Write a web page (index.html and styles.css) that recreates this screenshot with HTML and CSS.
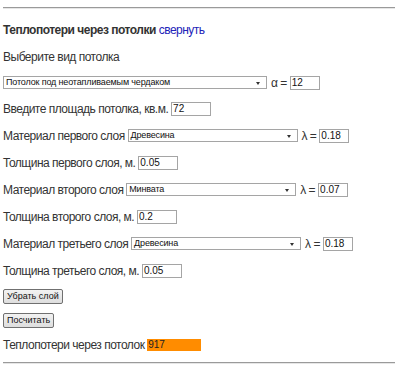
FILE: index.html
```html
<!DOCTYPE html>
<html lang="ru">
<head>
    <meta charset="UTF-8">
    <title>Теплопотери через потолки</title>
    <link rel="stylesheet" href="styles.css">
</head>
<body>
    <div class="calc">
        <hr class="rule rule-top">

        <div class="row row-title">
            <b>Теплопотери через потолки</b>&nbsp;<a href="#" class="toggle">свернуть</a>
        </div>

        <div class="row">Выберите вид потолка</div>

        <div class="row row-select">
            <span class="select select-wide">Потолок под неотапливаемым чердаком</span>
            <span class="sym">α =</span>
            <span class="field field-coef">12</span>
        </div>

        <div class="row">
            Введите площадь потолка, кв.м.&nbsp;<span class="field">72</span>
        </div>

        <div class="row">
            Материал первого слоя&nbsp;<span class="select">Древесина</span>
            <span class="sym">λ =</span>
            <span class="field field-coef">0.18</span>
        </div>

        <div class="row">
            Толщина первого слоя, м.&nbsp;<span class="field">0.05</span>
        </div>

        <div class="row">
            Материал второго слоя&nbsp;<span class="select">Минвата</span>
            <span class="sym">λ =</span>
            <span class="field field-coef">0.07</span>
        </div>

        <div class="row">
            Толщина второго слоя, м.&nbsp;<span class="field">0.2</span>
        </div>

        <div class="row">
            Материал третьего слоя&nbsp;<span class="select">Древесина</span>
            <span class="sym">λ =</span>
            <span class="field field-coef">0.18</span>
        </div>

        <div class="row">
            Толщина третьего слоя, м.&nbsp;<span class="field">0.05</span>
        </div>

        <div class="row row-btn">
            <button class="btn">Убрать слой</button>
        </div>

        <div class="row row-btn">
            <button class="btn">Посчитать</button>
        </div>

        <div class="row row-result">
            Теплопотери через потолок&nbsp;<span class="result">917</span>
        </div>

        <hr class="rule rule-bottom">
    </div>
</body>
</html>
```

FILE: styles.css
```css
html, body {
    margin: 0;
    padding: 0;
    background: #fff;
}

body {
    font-family: "Liberation Sans", Arial, sans-serif;
    font-size: 12px;
    letter-spacing: -0.5px;
    color: #333;
}

.calc {
    width: 392px;
    padding: 0 0 0 3px;
}

.rule {
    margin: 0;
    height: 0;
    border: 0;
    border-top: 1px solid #9a9a9a;
    border-bottom: 1px solid #e6e6e6;
}

.rule-top {
    margin-top: 7px;
}

.rule-bottom {
    margin-top: 5px;
}

.row {
    display: flex;
    align-items: center;
    height: 27px;
    white-space: nowrap;
}

.row-title {
    margin-top: 7px;
}

.row-select {
    height: 25px;
}

.row-btn {
    height: 24px;
}

.row-result {
    height: 25px;
}

.toggle {
    color: #2323b8;
    text-decoration: none;
}

.select {
    position: relative;
    display: inline-block;
    box-sizing: border-box;
    width: 170px;
    height: 13px;
    line-height: 11px;
    padding: 0 12px 0 2px;
    border: 1px solid #a5a5a5;
    font-size: 9px;
    letter-spacing: -0.15px;
    color: #111;
    background: #fff;
}

.select::after {
    content: '';
    position: absolute;
    right: 6px;
    top: 5px;
    border-left: 2px solid transparent;
    border-right: 2px solid transparent;
    border-top: 3px solid #333;
}

.select-wide {
    width: 264px;
}

.sym {
    margin: 0 3px 0 4px;
}

.field {
    display: inline-block;
    box-sizing: border-box;
    width: 40px;
    height: 14px;
    line-height: 12px;
    padding: 0 1px;
    border: 1px solid #a5a5a5;
    font-size: 10px;
    letter-spacing: 0;
    color: #111;
    background: #fff;
}

.field-coef {
    width: 30px;
}

.btn {
    box-sizing: border-box;
    height: 15px;
    margin: 0;
    padding: 0 3px;
    border: 1px solid #707070;
    border-radius: 2px;
    background: linear-gradient(#f2f2f2, #dedede);
    font-family: "Liberation Sans", Arial, sans-serif;
    font-size: 9px;
    letter-spacing: 0;
    line-height: 13px;
    color: #111;
}

.result {
    display: inline-block;
    width: 53px;
    height: 12px;
    line-height: 12px;
    padding-left: 1px;
    background: #ff8c00;
    font-size: 10px;
    letter-spacing: 0;
    color: #222;
}
```
